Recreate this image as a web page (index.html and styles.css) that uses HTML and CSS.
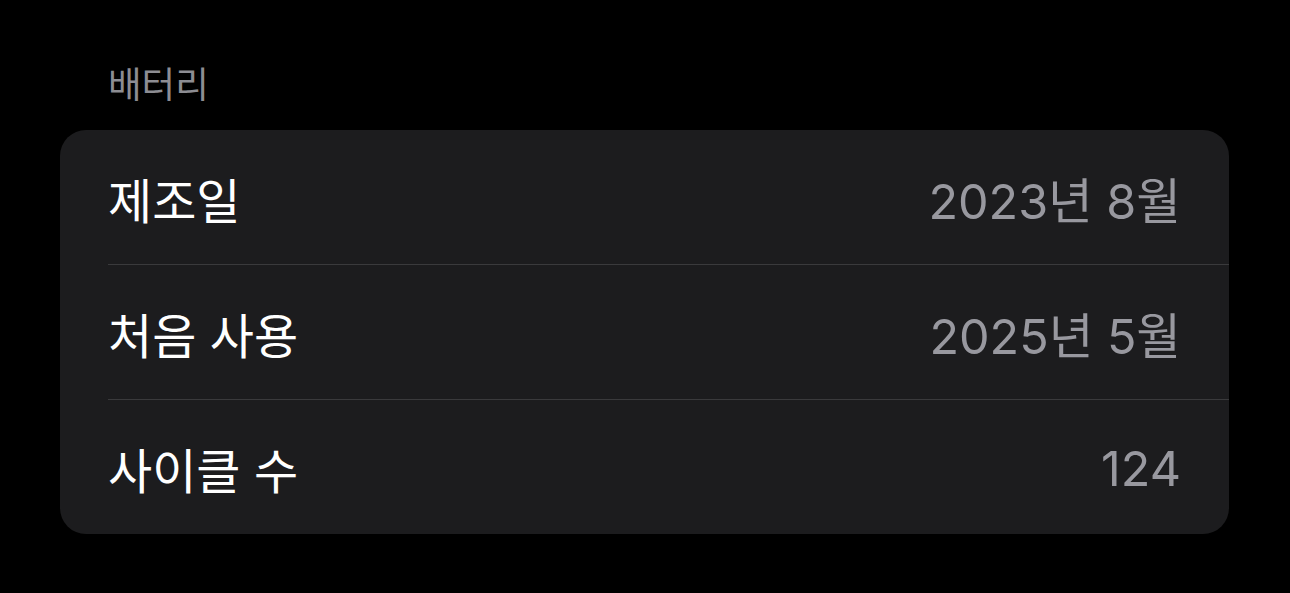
FILE: index.html
```html
<!DOCTYPE html>
<html lang="ko">
<head>
<meta charset="utf-8">
<link rel="stylesheet" href="styles.css">
</head>
<body>
<main class="page">
  <h2 class="section-header">배터리</h2>
  <section class="card">
    <div class="row">
      <span class="label">제조일</span>
      <span class="value">2023년 8월</span>
    </div>
    <div class="row">
      <span class="label">처음 사용</span>
      <span class="value">2025년 5월</span>
    </div>
    <div class="row">
      <span class="label">사이클 수</span>
      <span class="value">124</span>
    </div>
  </section>
</main>
</body>
</html>
```

FILE: styles.css
```css
html, body {
  margin: 0;
  padding: 0;
  background: #000;
}

body {
  font-family: Inter, "Noto Sans CJK KR", sans-serif;
  color: #fff;
}

.page {
  padding: 60px 61px 0 60px;
}

.section-header {
  margin: 0 0 20px 48px;
  font-size: 36.5px;
  font-weight: 400;
  line-height: 50px;
  color: #8d8d93;
}

.card {
  background: #1c1c1e;
  border-radius: 26px;
  overflow: hidden;
}

.row {
  display: flex;
  justify-content: space-between;
  align-items: center;
  height: 135px;
  margin-left: 48px;
  padding-right: 48px;
  padding-top: 2px;
  box-sizing: border-box;
  border-top: 1px solid #3a3a3c;
}

.row:first-child {
  height: 134px;
  border-top: none;
}

.label {
  font-size: 48px;
  color: #fff;
}

.value {
  font-size: 48.5px;
  color: #98989f;
}
```
